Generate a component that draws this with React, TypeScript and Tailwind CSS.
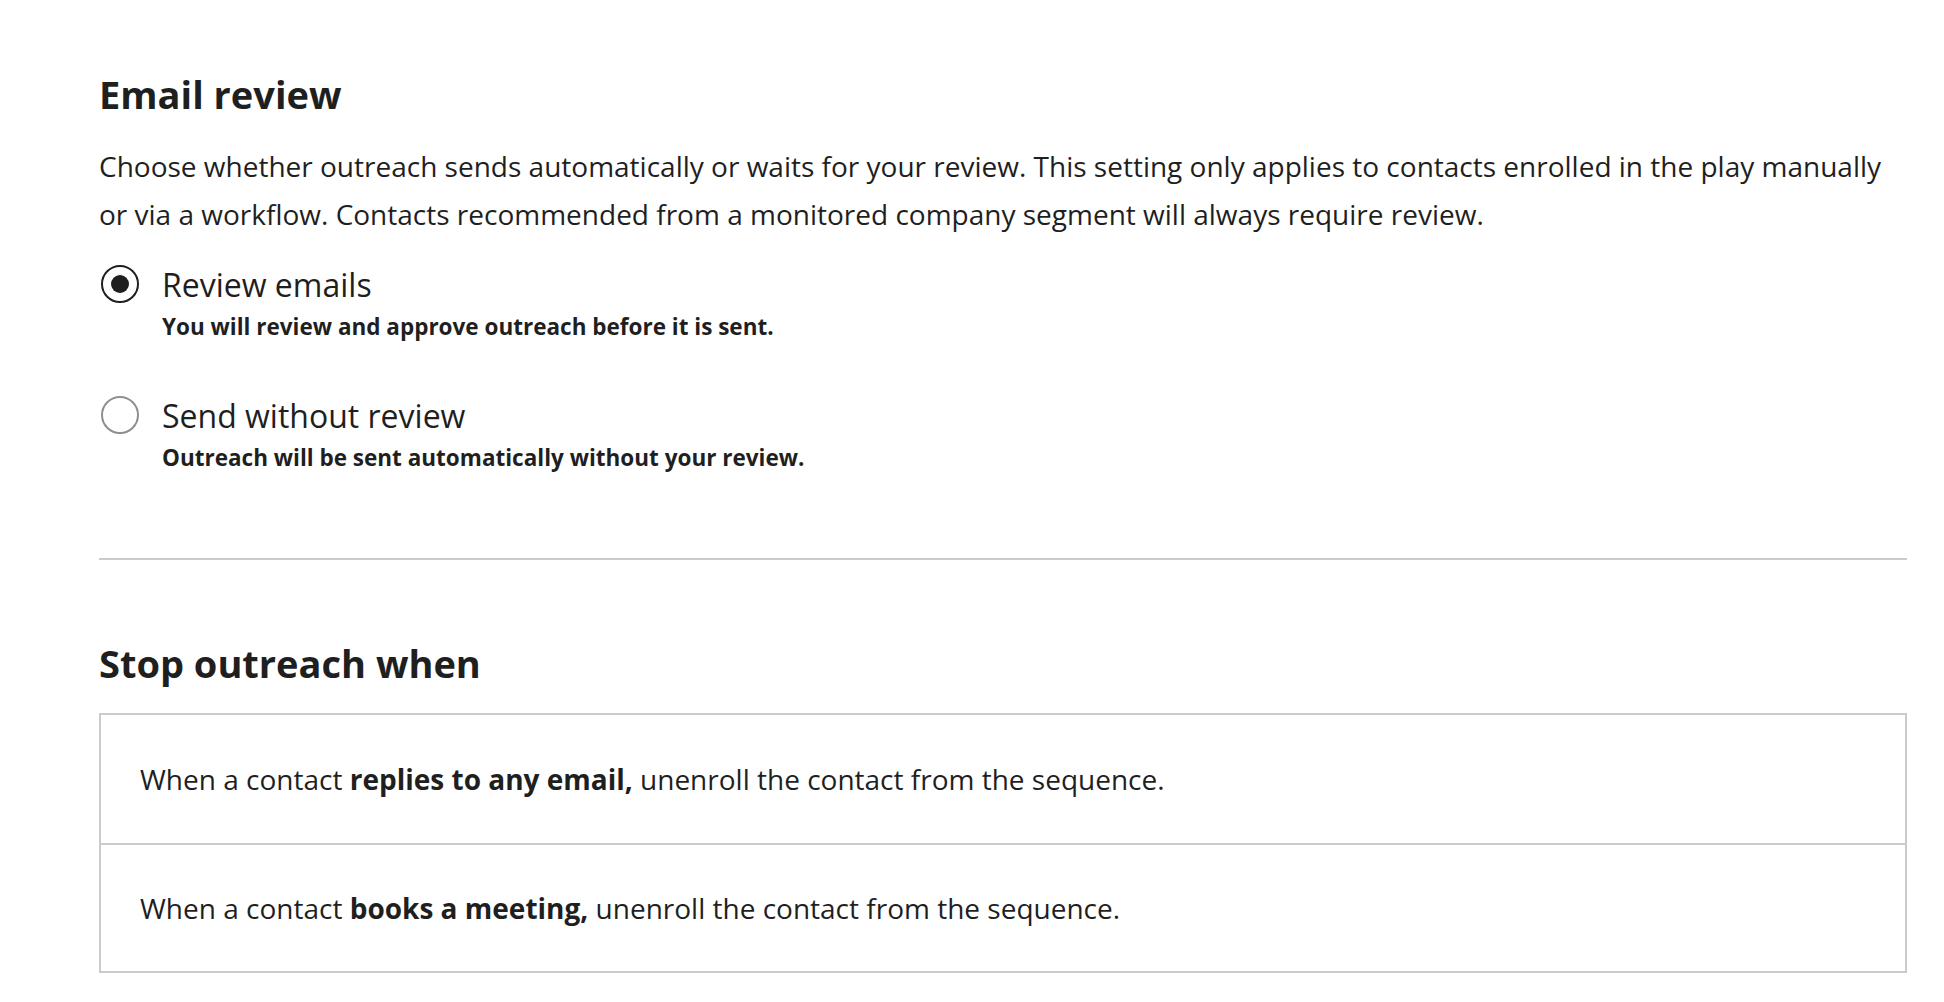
import { useState } from 'react';

const options = [
    {
        value: 'review',
        label: 'Review emails',
        help: 'You will review and approve outreach before it is sent.',
    },
    {
        value: 'auto',
        label: 'Send without review',
        help: 'Outreach will be sent automatically without your review.',
    },
];

const RadioOption = ({ label, help, checked, onSelect }: { label: string; help: string; checked: boolean; onSelect: () => void }) => (
    <label className="flex cursor-pointer items-start gap-[23px]" onClick={onSelect}>
        <span
            className={`ml-[2px] mt-[2px] flex h-[38px] w-[38px] shrink-0 items-center justify-center rounded-full border-2 bg-white ${
                checked ? 'border-[#1f1f1f]' : 'border-[#8f8f8f]'
            }`}
        >
            {checked && <span className="h-[18px] w-[18px] rounded-full bg-[#1f1f1f]" />}
        </span>
        <span className="flex flex-col">
            <span className="text-[32px] leading-[44px] text-[#1f1f1f]">{label}</span>
            <span className="mt-[5px] text-[22.5px] font-bold leading-[30px] text-[#1f1f1f]">{help}</span>
        </span>
    </label>
);

const App = () => {
    const [mode, setMode] = useState('review');

    return (
        <div className="min-h-screen bg-white pl-[99px] pr-[37px] pt-[70px] text-[#1f1f1f] font-['Open_Sans',sans-serif]">
            <h2 className="text-[38px] font-bold leading-[48px]">Email review</h2>
            <p className="mt-[24px] text-[28px] leading-[48px]">
                Choose whether outreach sends automatically or waits for your review. This setting only applies to contacts enrolled in the play manually
                or via a workflow. Contacts recommended from a monitored company segment will always require review.
            </p>

            <div className="mt-[25px] flex flex-col gap-[52px]">
                {options.map((o) => (
                    <RadioOption key={o.value} label={o.label} help={o.help} checked={mode === o.value} onSelect={() => setMode(o.value)} />
                ))}
            </div>

            <hr className="mt-[85px] border-0 border-t-2 border-[#cbcbcb]" />

            <h2 className="mt-[79px] text-[38px] font-bold leading-[48px]">Stop outreach when</h2>

            <div className="mt-[26px] border-2 border-[#cbcbcb]">
                <div className="flex h-[128px] items-center px-[39px] text-[28px]">
                    <span>
                        When a contact <b>replies to any email,</b> unenroll the contact from the sequence.
                    </span>
                </div>
                <div className="flex h-[128px] items-center border-t-2 border-[#cbcbcb] px-[39px] text-[28px]">
                    <span>
                        When a contact <b>books a meeting,</b> unenroll the contact from the sequence.
                    </span>
                </div>
            </div>
        </div>
    );
};

export default App;
